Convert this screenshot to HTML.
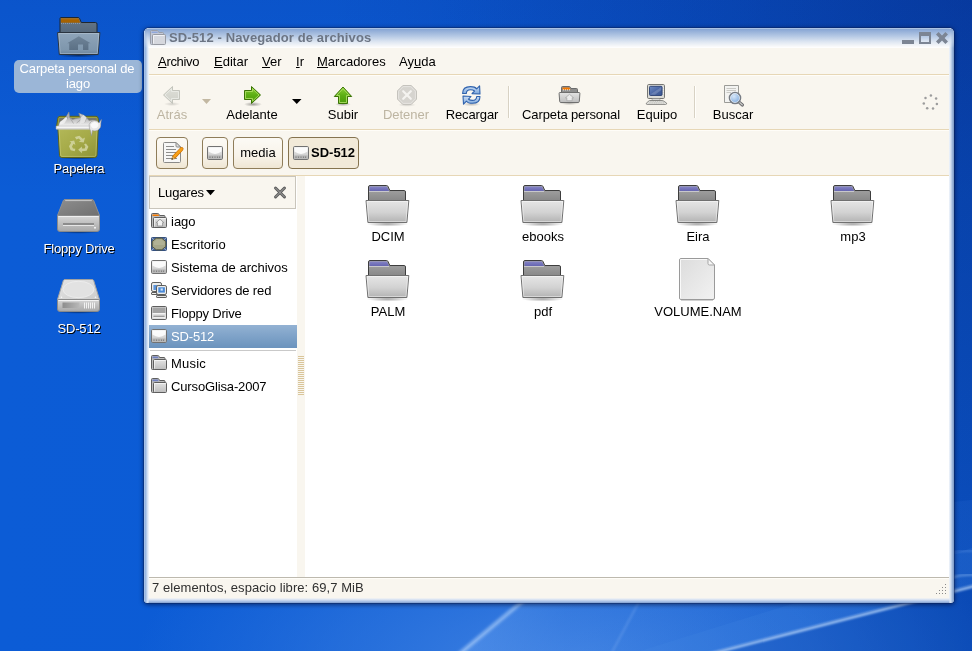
<!DOCTYPE html>
<html>
<head>
<meta charset="utf-8">
<title>SD-512</title>
<style>
*{margin:0;padding:0;box-sizing:border-box;}
html,body{width:972px;height:651px;overflow:hidden;}
body{font-family:"Liberation Sans",sans-serif;font-size:13px;color:#000;position:relative;
 background:
  radial-gradient(ellipse 640px 560px at 972px 0px, rgba(0,22,105,.28) 0%, rgba(0,22,105,.16) 45%, rgba(0,22,105,0) 100%),
  linear-gradient(180deg, rgba(0,20,110,.10) 0%, rgba(0,20,110,0) 30%),
  linear-gradient(90deg,#0c5cd6 0%,#0c5bd4 45%,#0b55ca 75%,#0a4dbb 100%);
}
.abs{position:absolute;}
svg{position:absolute;overflow:visible;}
.t{position:absolute;white-space:nowrap;line-height:15px;height:15px;font-size:13px;will-change:transform;}
.c{text-align:center;}
/* desktop labels */
.dl{color:#fff;text-shadow:1px 1px 0 #000;letter-spacing:-.15px;}
/* window */
#win{position:absolute;left:144px;top:28px;width:810px;height:575px;border-radius:5px 5px 4px 4px;
 background:#fff;box-shadow:0 0 0 1px rgba(10,30,80,.35),0 1px 4px 1px rgba(0,0,30,.5);overflow:hidden;}
#frame{position:absolute;left:0;top:0;width:810px;height:575px;border-radius:5px 5px 3px 3px;
 background:
  linear-gradient(90deg,#bcd0ee 0,#8fb0de 1px,#a6c1e7 2px,#c4d6f0 3px,#e2ebf7 4px,#fff 5px,#fff 805px,#e2ebf7 806px,#c8d8ee 807px,#a9c0e0 808px,#8ba6cf 809px,#7f9bc4 810px);}
#title{position:absolute;left:0;top:0;width:810px;height:20px;border-radius:5px 5px 0 0;
 background:linear-gradient(180deg,#cfdef3 0,#86a6d3 1px,#8daad6 2px,#b4c8e4 8px,#dfe7f2 14px,#fbfbfb 19px,#fff 20px);}
#titleL{z-index:2;position:absolute;left:0;top:2px;width:5px;height:573px;-webkit-mask-image:linear-gradient(180deg,rgba(0,0,0,0) 0,rgba(0,0,0,.25) 6px,#000 18px);mask-image:linear-gradient(180deg,rgba(0,0,0,0) 0,rgba(0,0,0,.25) 6px,#000 18px);
 background:linear-gradient(90deg,#bcd0ee 0,#8fb0de 1px,#a6c1e7 2px,#c4d6f0 3px,#e2ebf7 4px,rgba(255,255,255,0) 5px);}
#titleR{z-index:2;position:absolute;right:0;top:2px;width:5px;height:573px;-webkit-mask-image:linear-gradient(180deg,rgba(0,0,0,0) 0,rgba(0,0,0,.25) 6px,#000 18px);mask-image:linear-gradient(180deg,rgba(0,0,0,0) 0,rgba(0,0,0,.25) 6px,#000 18px);
 background:linear-gradient(270deg,#7f9bc4 0,#8ba6cf 1px,#a9c0e0 2px,#c8d8ee 3px,#e2ebf7 4px,rgba(255,255,255,0) 5px);}
#bot{position:absolute;left:0;bottom:0;width:810px;height:5px;border-radius:0 0 3px 3px;
 background:linear-gradient(180deg,#f4f4f2 0,#e6ebf3 1px,#cfdcf0 2px,#b4c9e9 3px,#9db8e2 4px,#7f9cca 5px);}
#inner{position:absolute;left:5px;top:20px;width:800px;height:550px;background:#f9f6ef;}
.hl{position:absolute;height:1px;left:0;width:800px;}
.pb{position:absolute;top:89px;height:32px;border:1px solid #8f7d59;border-radius:4px;
 background:linear-gradient(180deg,#fcfaf5 0,#f8f3e9 60%,#efe6d3 100%);}
.pb.on{background:linear-gradient(180deg,#f2ead9 0,#f1e9d9 100%);border-color:#85734f;}
.row{position:absolute;left:0;width:148px;height:23px;}
</style>
</head>
<body>
<!--DESKTOP-->
<svg id="bg" style="left:0;top:0" width="972" height="651" viewBox="0 0 972 651">
<defs>
<radialGradient id="w0" cx="0" cy="0" r="1" gradientUnits="userSpaceOnUse" gradientTransform="translate(575,665) scale(440,185)"><stop offset="0" stop-color="#4a8ae6" stop-opacity=".85"/><stop offset=".55" stop-color="#3f82e2" stop-opacity=".45"/><stop offset="1" stop-color="#3b7ee0" stop-opacity="0"/></radialGradient>
<linearGradient id="w1" x1="462" y1="0" x2="760" y2="0" gradientUnits="userSpaceOnUse"><stop offset="0" stop-color="#6aa3f0" stop-opacity=".45"/><stop offset=".35" stop-color="#4c8be6" stop-opacity=".25"/><stop offset="1" stop-color="#3b7ee0" stop-opacity=".12"/></linearGradient>
<filter id="bl1" x="-20%" y="-20%" width="140%" height="140%"><feGaussianBlur stdDeviation="1.6"/></filter>
<filter id="bl2" x="-20%" y="-20%" width="140%" height="140%"><feGaussianBlur stdDeviation=".8"/></filter>
</defs>
<rect x="100" y="440" width="872" height="211" fill="url(#w0)"/>
<path d="M462,651 L521,603 L600,540 L972,500 L972,585 L715,651 Z" fill="url(#w1)"/>
<path d="M715,651 L972,585 L972,651 Z" fill="#062f8c" fill-opacity=".14"/>
<path d="M640,651 L715,651 L972,585 L972,548 Z" fill="#4d8ce8" fill-opacity=".16"/>
<path d="M458,655 L524,600" stroke="#a6cbf8" stroke-opacity=".7" stroke-width="4" filter="url(#bl1)"/>
<path d="M610,656 L641,598" stroke="#9ec5f7" stroke-opacity=".22" stroke-width="2.2" filter="url(#bl2)"/>
<path d="M700,656.5 L980,584.5" stroke="#b4d3fa" stroke-opacity=".85" stroke-width="2.6" filter="url(#bl2)"/>
<path d="M950,578 Q963,574 975,575" stroke="#9ec5f7" stroke-opacity=".5" stroke-width="2" fill="none" filter="url(#bl2)"/>
<path d="M950,553 Q963,550 975,551" stroke="#9ec5f7" stroke-opacity=".3" stroke-width="1.5" fill="none" filter="url(#bl2)"/>
</svg>
<div id="desk">
<div class="abs" style="left:14px;top:60px;width:128px;height:33px;border-radius:5px;background:#9bb6d7"></div>
<div class="t c dl" style="left:13px;width:128px;top:61px;text-shadow:none;letter-spacing:-.16px">Carpeta personal de</div>
<div class="t c dl" style="left:14px;width:128px;top:76px;text-shadow:none">iago</div>
<div class="t c dl" style="left:19px;width:120px;top:161px">Papelera</div>
<div class="t c dl" style="left:19px;width:120px;top:241px">Floppy Drive</div>
<div class="t c dl" style="left:19px;width:120px;top:321px">SD-512</div>
</div>
<!--WINDOW-->
<div id="win">
 <div id="frame"></div>
 <div id="title"></div>
 <div class="t" style="left:25px;top:2px;font-weight:bold;color:#6c7584;letter-spacing:.12px">SD-512 - Navegador de archivos</div>
 <!--TITLEICON-->
 <div class="abs" style="left:758px;top:12px;width:12px;height:4px;background:#7c8594"></div>
 <div class="abs" style="left:775px;top:4px;width:12px;height:12px;border:2px solid #7c8594;border-top-width:4px"></div>
 <svg style="left:792px;top:4px" width="12" height="12" viewBox="0 0 12 12"><path d="M2.6 0 L6 3.4 L9.4 0 L12 2.6 L8.6 6 L12 9.4 L9.4 12 L6 8.6 L2.6 12 L0 9.4 L3.4 6 L0 2.6 Z" fill="#7c8594"/></svg>
 <div class="abs" style="left:0;top:3px;width:1px;height:17px;background:#c2d5ef"></div><div id="titleL"></div><div id="titleR"></div>
 <div id="bot"></div>
 <div id="inner">
  <!-- menubar 48..74 -->
  <div class="t" style="left:9px;top:6px;letter-spacing:-.3px"><u>A</u>rchivo</div>
  <div class="t" style="left:65px;top:6px"><u>E</u>ditar</div>
  <div class="t" style="left:113px;top:6px"><u>V</u>er</div>
  <div class="t" style="left:147px;top:6px"><u>I</u>r</div>
  <div class="t" style="left:168px;top:6px"><u>M</u>arcadores</div>
  <div class="t" style="left:250px;top:6px">Ay<u>u</u>da</div>
  <div class="hl" style="top:26px;background:#e7d7b6"></div>
  <div class="hl" style="top:27px;background:#fffdf8"></div>
  <!-- toolbar 75..129 -->
  <div class="t c" style="left:-7px;width:60px;top:59px;color:#bdb5a2">Atrás</div>
  <div class="t c" style="left:73px;width:60px;top:59px">Adelante</div>
  <div class="t c" style="left:164px;width:60px;top:59px">Subir</div>
  <div class="t c" style="left:227px;width:60px;top:59px;color:#bdb5a2">Detener</div>
  <div class="t c" style="left:283px;width:80px;top:59px;letter-spacing:-.12px">Recargar</div>
  <div class="t c" style="left:361.5px;width:120px;top:59px;letter-spacing:-.12px">Carpeta personal</div>
  <div class="t c" style="left:478px;width:60px;top:59px">Equipo</div>
  <div class="t c" style="left:554px;width:60px;top:59px">Buscar</div>
  <div class="abs" style="left:359px;top:38px;width:1px;height:32px;background:#d8d2c4"></div>
  <div class="abs" style="left:360px;top:38px;width:1px;height:32px;background:#fffefb"></div>
  <div class="abs" style="left:545px;top:38px;width:1px;height:32px;background:#d8d2c4"></div>
  <div class="abs" style="left:546px;top:38px;width:1px;height:32px;background:#fffefb"></div>
  <div class="hl" style="top:81px;background:#e7d7b6"></div>
  <div class="hl" style="top:82px;background:#fffdf8"></div>
  <!--TOOLICONS-->
  <!-- pathbar 130..175 -->
  <div class="pb" style="left:7px;width:32px"></div>
  <div class="pb" style="left:53px;width:26px"></div>
  <div class="pb" style="left:84px;width:50px"><div class="t c" style="left:0;width:48px;top:7px">media</div></div>
  <div class="pb on" style="left:139px;width:71px"><div class="t" style="left:22px;top:7px;font-weight:bold">SD-512</div></div>
  <!--PATHICONS-->
  <div class="hl" style="top:127px;background:#e7d7b6"></div>
  <!-- sidebar -->
  <div class="abs" style="left:0;top:128px;width:148px;height:401px;background:#fff"></div>
  <div class="abs" style="left:0;top:128px;width:147px;height:33px;background:#f9f6ef;border:1px solid #c9c5bb"></div>
  <div class="t" style="left:9px;top:137px;letter-spacing:-.15px">Lugares</div>
  
  <div class="t" style="left:22px;top:166px;color:#000;letter-spacing:0px">iago</div>
<div class="t" style="left:22px;top:189px;color:#000;letter-spacing:0.05px">Escritorio</div>
<div class="t" style="left:22px;top:212px;color:#000;letter-spacing:-0.02px">Sistema de archivos</div>
<div class="t" style="left:22px;top:235px;color:#000;letter-spacing:-0.14px">Servidores de red</div>
<div class="t" style="left:22px;top:258px;color:#000;letter-spacing:-0.2px">Floppy Drive</div>
<div class="abs" style="left:0;top:277px;width:148px;height:23px;background:linear-gradient(180deg,#93b2d3 0,#7ea2c8 50%,#6b93bd 100%)"></div>
<div class="t" style="left:22px;top:281px;color:#fff;letter-spacing:-0.15px">SD-512</div>
<div class="t" style="left:22px;top:308px;color:#000;letter-spacing:0.2px">Music</div>
<div class="t" style="left:22px;top:331px;color:#000;letter-spacing:-0.14px">CursoGlisa-2007</div>
<div class="abs" style="left:1px;top:302px;width:146px;height:1px;background:#c9c9c9"></div>

  <!-- splitter -->
  <!--SPLIT-->
  <!-- main view -->
  <div class="abs" style="left:156px;top:128px;width:644px;height:401px;background:#fff"></div>
  <div class="t c" style="left:179px;width:120px;top:181px">DCIM</div>
<div class="t c" style="left:334px;width:120px;top:181px">ebooks</div>
<div class="t c" style="left:489px;width:120px;top:181px">Eira</div>
<div class="t c" style="left:644px;width:120px;top:181px">mp3</div>
<div class="t c" style="left:179px;width:120px;top:256px">PALM</div>
<div class="t c" style="left:334px;width:120px;top:256px">pdf</div>
<div class="t c" style="left:489px;width:120px;top:256px">VOLUME.NAM</div>

  <!-- statusbar -->
  <div class="hl" style="top:529px;background:#bdb9ae"></div>
  <div class="hl" style="top:530px;background:#fffdf8"></div>
  <div class="t" style="left:3px;top:532px;color:#303030;letter-spacing:.06px">7 elementos, espacio libre: 69,7 MiB</div>
  <!--GRIP-->
 </div>
</div>
<svg id="ov" style="left:0;top:0;pointer-events:none" width="972" height="651" viewBox="0 0 972 651"><defs>
<linearGradient id="gBack" x1="0" y1="0" x2="0" y2="1"><stop offset="0" stop-color="#a9a9a9"/><stop offset="1" stop-color="#858585"/></linearGradient>
<linearGradient id="gFront" x1="0" y1="0" x2="0" y2="1"><stop offset="0" stop-color="#e6e6e6"/><stop offset=".55" stop-color="#d2d2d2"/><stop offset="1" stop-color="#b2b2b2"/></linearGradient>
<linearGradient id="gTab" x1="0" y1="0" x2="0" y2="1"><stop offset="0" stop-color="#8584c6"/><stop offset="1" stop-color="#6665b0"/></linearGradient>
<radialGradient id="gSh" cx=".5" cy=".5" r=".5"><stop offset="0" stop-color="#000" stop-opacity=".45"/><stop offset="1" stop-color="#000" stop-opacity="0"/></radialGradient>
<linearGradient id="gFile" x1="0" y1="0" x2="1" y2="1"><stop offset="0" stop-color="#dcdcdc"/><stop offset="1" stop-color="#f2f2f2"/></linearGradient>
<linearGradient id="gHBack" x1="0" y1="0" x2="0" y2="1"><stop offset="0" stop-color="#68798b"/><stop offset="1" stop-color="#54677a"/></linearGradient>
<linearGradient id="gHFront" x1="0" y1="0" x2="0" y2="1"><stop offset="0" stop-color="#8fa5ba"/><stop offset=".8" stop-color="#7e96ac"/><stop offset="1" stop-color="#6c849b"/></linearGradient>
<linearGradient id="gHouse" x1="0" y1="0" x2="0" y2="1"><stop offset="0" stop-color="#6f8498"/><stop offset="1" stop-color="#5b7085"/></linearGradient>
<linearGradient id="gBin" x1="0" y1="0" x2="1" y2="1"><stop offset="0" stop-color="#b3b858"/><stop offset=".5" stop-color="#a5aa48"/><stop offset="1" stop-color="#8d9236"/></linearGradient>
<linearGradient id="gPaper" x1="0" y1="0" x2="0" y2="1"><stop offset="0" stop-color="#e4e4e4"/><stop offset=".35" stop-color="#b4b4b4"/><stop offset=".7" stop-color="#d4d4d4"/><stop offset="1" stop-color="#f6f6f6"/></linearGradient>
<linearGradient id="gFlTop" x1="0" y1="0" x2="1" y2="1"><stop offset="0" stop-color="#8e8e8e"/><stop offset="1" stop-color="#707070"/></linearGradient>
<linearGradient id="gFlFront" x1="0" y1="0" x2="0" y2="1"><stop offset="0" stop-color="#d9d9d9"/><stop offset=".3" stop-color="#c8c8c8"/><stop offset="1" stop-color="#a8a8a8"/></linearGradient>
<linearGradient id="gHdTop" x1="0" y1="0" x2="1" y2="1"><stop offset="0" stop-color="#e4e4e4"/><stop offset="1" stop-color="#cdcdcd"/></linearGradient>
<linearGradient id="gSlot" x1="0" y1="0" x2="1" y2="0"><stop offset="0" stop-color="#8d8d8d"/><stop offset="1" stop-color="#b8b8b8"/></linearGradient>
</defs>
<g transform="translate(365,185)">
<ellipse cx="22.5" cy="39" rx="21" ry="2.6" fill="url(#gSh)" opacity=".8"/>
<path d="M3.5,2 Q3.5,.5 5,.5 L21.5,.5 Q22.6,.5 23,1.5 L24.8,5.5 L39.2,5.5 Q40.5,5.5 40.5,7 L40.5,17 L3.5,17 Z" fill="url(#gBack)" stroke="#3d3d3d" stroke-width="1"/>
<path d="M4.5,2 Q4.5,1.5 5,1.5 L21.5,1.5 Q22,1.5 22.3,2.2 L24,6 L4.5,6 Z" fill="url(#gTab)"/>
<path d="M4.5,6.5 H24" stroke="#f4f4fb" stroke-width="1" stroke-dasharray="1 1"/>
<path d="M1,15.5 L43.8,15.5 L41.9,37.5 L2.9,37.5 Z" fill="url(#gFront)" stroke="#707070" stroke-width="1" stroke-linejoin="round"/>
<path d="M2.1,16.5 L42.7,16.5 L41,36.5 L3.8,36.5 Z" fill="none" stroke="#fff" stroke-opacity=".45" stroke-width="1"/>
</g>
<g transform="translate(520,185)">
<ellipse cx="22.5" cy="39" rx="21" ry="2.6" fill="url(#gSh)" opacity=".8"/>
<path d="M3.5,2 Q3.5,.5 5,.5 L21.5,.5 Q22.6,.5 23,1.5 L24.8,5.5 L39.2,5.5 Q40.5,5.5 40.5,7 L40.5,17 L3.5,17 Z" fill="url(#gBack)" stroke="#3d3d3d" stroke-width="1"/>
<path d="M4.5,2 Q4.5,1.5 5,1.5 L21.5,1.5 Q22,1.5 22.3,2.2 L24,6 L4.5,6 Z" fill="url(#gTab)"/>
<path d="M4.5,6.5 H24" stroke="#f4f4fb" stroke-width="1" stroke-dasharray="1 1"/>
<path d="M1,15.5 L43.8,15.5 L41.9,37.5 L2.9,37.5 Z" fill="url(#gFront)" stroke="#707070" stroke-width="1" stroke-linejoin="round"/>
<path d="M2.1,16.5 L42.7,16.5 L41,36.5 L3.8,36.5 Z" fill="none" stroke="#fff" stroke-opacity=".45" stroke-width="1"/>
</g>
<g transform="translate(675,185)">
<ellipse cx="22.5" cy="39" rx="21" ry="2.6" fill="url(#gSh)" opacity=".8"/>
<path d="M3.5,2 Q3.5,.5 5,.5 L21.5,.5 Q22.6,.5 23,1.5 L24.8,5.5 L39.2,5.5 Q40.5,5.5 40.5,7 L40.5,17 L3.5,17 Z" fill="url(#gBack)" stroke="#3d3d3d" stroke-width="1"/>
<path d="M4.5,2 Q4.5,1.5 5,1.5 L21.5,1.5 Q22,1.5 22.3,2.2 L24,6 L4.5,6 Z" fill="url(#gTab)"/>
<path d="M4.5,6.5 H24" stroke="#f4f4fb" stroke-width="1" stroke-dasharray="1 1"/>
<path d="M1,15.5 L43.8,15.5 L41.9,37.5 L2.9,37.5 Z" fill="url(#gFront)" stroke="#707070" stroke-width="1" stroke-linejoin="round"/>
<path d="M2.1,16.5 L42.7,16.5 L41,36.5 L3.8,36.5 Z" fill="none" stroke="#fff" stroke-opacity=".45" stroke-width="1"/>
</g>
<g transform="translate(830,185)">
<ellipse cx="22.5" cy="39" rx="21" ry="2.6" fill="url(#gSh)" opacity=".8"/>
<path d="M3.5,2 Q3.5,.5 5,.5 L21.5,.5 Q22.6,.5 23,1.5 L24.8,5.5 L39.2,5.5 Q40.5,5.5 40.5,7 L40.5,17 L3.5,17 Z" fill="url(#gBack)" stroke="#3d3d3d" stroke-width="1"/>
<path d="M4.5,2 Q4.5,1.5 5,1.5 L21.5,1.5 Q22,1.5 22.3,2.2 L24,6 L4.5,6 Z" fill="url(#gTab)"/>
<path d="M4.5,6.5 H24" stroke="#f4f4fb" stroke-width="1" stroke-dasharray="1 1"/>
<path d="M1,15.5 L43.8,15.5 L41.9,37.5 L2.9,37.5 Z" fill="url(#gFront)" stroke="#707070" stroke-width="1" stroke-linejoin="round"/>
<path d="M2.1,16.5 L42.7,16.5 L41,36.5 L3.8,36.5 Z" fill="none" stroke="#fff" stroke-opacity=".45" stroke-width="1"/>
</g>
<g transform="translate(365,260)">
<ellipse cx="22.5" cy="39" rx="21" ry="2.6" fill="url(#gSh)" opacity=".8"/>
<path d="M3.5,2 Q3.5,.5 5,.5 L21.5,.5 Q22.6,.5 23,1.5 L24.8,5.5 L39.2,5.5 Q40.5,5.5 40.5,7 L40.5,17 L3.5,17 Z" fill="url(#gBack)" stroke="#3d3d3d" stroke-width="1"/>
<path d="M4.5,2 Q4.5,1.5 5,1.5 L21.5,1.5 Q22,1.5 22.3,2.2 L24,6 L4.5,6 Z" fill="url(#gTab)"/>
<path d="M4.5,6.5 H24" stroke="#f4f4fb" stroke-width="1" stroke-dasharray="1 1"/>
<path d="M1,15.5 L43.8,15.5 L41.9,37.5 L2.9,37.5 Z" fill="url(#gFront)" stroke="#707070" stroke-width="1" stroke-linejoin="round"/>
<path d="M2.1,16.5 L42.7,16.5 L41,36.5 L3.8,36.5 Z" fill="none" stroke="#fff" stroke-opacity=".45" stroke-width="1"/>
</g>
<g transform="translate(520,260)">
<ellipse cx="22.5" cy="39" rx="21" ry="2.6" fill="url(#gSh)" opacity=".8"/>
<path d="M3.5,2 Q3.5,.5 5,.5 L21.5,.5 Q22.6,.5 23,1.5 L24.8,5.5 L39.2,5.5 Q40.5,5.5 40.5,7 L40.5,17 L3.5,17 Z" fill="url(#gBack)" stroke="#3d3d3d" stroke-width="1"/>
<path d="M4.5,2 Q4.5,1.5 5,1.5 L21.5,1.5 Q22,1.5 22.3,2.2 L24,6 L4.5,6 Z" fill="url(#gTab)"/>
<path d="M4.5,6.5 H24" stroke="#f4f4fb" stroke-width="1" stroke-dasharray="1 1"/>
<path d="M1,15.5 L43.8,15.5 L41.9,37.5 L2.9,37.5 Z" fill="url(#gFront)" stroke="#707070" stroke-width="1" stroke-linejoin="round"/>
<path d="M2.1,16.5 L42.7,16.5 L41,36.5 L3.8,36.5 Z" fill="none" stroke="#fff" stroke-opacity=".45" stroke-width="1"/>
</g>
<g transform="translate(679,258)">
<path d="M2,.5 H29 L35.5,7 V40 Q35.5,41.5 34,41.5 H2 Q.5,41.5 .5,40 V2 Q.5,.5 2,.5 Z" fill="url(#gFile)" stroke="#9a9a9a" stroke-width="1"/>
<path d="M1.5,40.5 V1.5 H28.5" fill="none" stroke="#fff" stroke-opacity=".8"/>
<path d="M29,.5 V5.5 Q29,7 30.5,7 H35.5 Z" fill="#f6f6f6" stroke="#a5a5a5" stroke-width="1" stroke-linejoin="round"/>
<path d="M2,42.5 H34" stroke="#000" stroke-opacity=".18"/>
</g>
<g transform="translate(57,17)">
<ellipse cx="21.5" cy="38.5" rx="21" ry="2" fill="url(#gSh)"/>
<path d="M3,1.5 Q3,.5 4,.5 L21,.5 Q22,.5 22.5,1.4 L24.3,5.5 L38.5,5.5 Q40,5.5 40,7 L40,17 L3,17 Z" fill="url(#gHBack)" stroke="#1f2730" stroke-width="1"/>
<path d="M4,2 Q4,1.5 4.5,1.5 L21,1.5 Q21.5,1.5 21.8,2.1 L23.4,5.8 L4,5.8 Z" fill="#a66200"/>
<path d="M4,1.9 H21.3" stroke="#b8700a" stroke-width=".8"/>
<path d="M4,6.4 H23.5" stroke="#aebccc" stroke-opacity=".75" stroke-width=".8" stroke-dasharray="1 1"/>
<path d="M.6,15.5 L42.9,15.5 L41.2,37.5 L2.3,37.5 Z" fill="url(#gHFront)" stroke="#2a343f" stroke-width="1" stroke-linejoin="round"/>
<path d="M1.7,16.5 L41.8,16.5 L40.3,36.5 L3.2,36.5 Z" fill="none" stroke="#c3d0de" stroke-opacity=".45"/>
<path d="M21.8,19.2 L33.6,26.2 L31.4,26.2 L31.4,33 L26,33 L26,27.4 L21,27.4 L21,33 L12.2,33 L12.2,26.2 L10.2,26.2 Z" fill="url(#gHouse)"/>
</g>
<g transform="translate(55,111)">
<ellipse cx="23.5" cy="46.8" rx="20" ry="1.8" fill="url(#gSh)"/>
<path d="M1.6,15.5 L2.8,7.2 Q3.1,5.3 5,5.3 L41,5.3 Q42.9,5.3 43.1,7.2 L44,15.5 L43.2,18 L2.9,18 Z" fill="#9ea240" stroke="#5f6416" stroke-width="1" stroke-linejoin="round"/>
<path d="M4.4,7 L41.6,7 L42.4,15.5 L3.4,15.5 Z" fill="#77776a"/>
<path d="M2.9,17.5 L43.2,17.5 L42,44.3 Q41.9,46.5 39.6,46.5 L6.9,46.5 Q4.6,46.5 4.5,44.3 Z" fill="url(#gBin)" stroke="#5f6416" stroke-width="1"/>
<path d="M4.1,18.6 L42,18.6 L40.9,44 Q40.8,45.4 39.4,45.4 L7.1,45.4 Q5.7,45.4 5.6,44 Z" fill="none" stroke="#d4d88a" stroke-opacity=".45"/>
<path d="M3.4,15 L5,11 L8,8.8 L11,6 L13.9,1 L14.6,6.2 L17.5,8.6 L21,7.6 L25.5,6.8 L23.8,2.2 L28.5,4 L31.5,6.6 L34,9.6 L38,9 L41.5,10.2 L42.4,15.5 L3.4,15.5 Z" fill="url(#gPaper)" stroke="#8a8a8a" stroke-width=".5" stroke-linejoin="round"/>
<path d="M13.9,1 L12.4,7.8 L7.6,11.6 M23.8,2.2 L26,8.4 L21.6,12 M14.6,6.2 L18.5,12.5 M31.5,6.6 L29.6,11.6" stroke="#7d7d7d" stroke-width=".55" fill="none" stroke-opacity=".8"/>
<path d="M5,11 L8,8.8 L11,6 L12.4,7.8 L9,12.6 L4.2,13.8 Z" fill="#f4f4f4" fill-opacity=".85"/>
<path d="M25.5,6.8 L28.5,4 L31.5,6.6 L29.6,11.6 L25,13 Z" fill="#e9e9e9" fill-opacity=".8"/>
<path d="M1.2,15 L35.8,15 L35.8,18.3 L1.8,18.3 Q1,18.3 1,17.4 Z" fill="#f4f4f4" stroke="#a9a9a9" stroke-width=".5"/>
<path d="M1.5,17.6 H35.6" stroke="#cfcfcf" stroke-width=".8"/>
<path d="M34.2,13.4 Q35.2,10 39.2,9.6 Q42.6,9.4 44,12 L46.4,8.4 L45.8,12.6 Q46.6,16.8 42.8,19.2 Q40,20.6 37.4,19.4 L36.6,25 L35.4,19.6 Q34,17.6 34.2,13.4 Z" fill="#e6e6e6" stroke="#8f8f8f" stroke-width=".5" stroke-linejoin="round"/>
<path d="M35.6,13.6 Q37,11 40,11 Q43.6,11.6 43.4,15 Q42,17.6 38.6,17.6 Q36,17 35.6,13.6 Z" fill="#fafafa" fill-opacity=".95"/>
<g fill="#d3d6a2" fill-opacity=".85" transform="translate(.4,1.6)">
<path d="M19.5,24.5 L24,23.2 L27.3,26.2 L29.6,25 L28.3,30 L23.3,29.2 L25.3,27.8 L23.3,26 L21,26.8 Z"/>
<path d="M30.5,31 L33,34.2 L31.2,38.2 L26.5,38.6 L26.5,40.6 L22.8,37.2 L26.5,34 L26.5,36 L29.3,35.8 L30,33.6 L28.6,32 Z"/>
<path d="M19.3,38.6 L15.3,37.6 L13.6,33.6 L15.8,29.8 L14,28.8 L18.8,27.8 L20,32.4 L18.1,31.2 L16.6,33.8 L17.6,35.8 L20,36.2 Z"/>
</g>
</g>
<g transform="translate(57,199)">
<ellipse cx="21.5" cy="33" rx="21" ry="1.8" fill="url(#gSh)"/>
<path d="M8,.5 L35,.5 Q36.2,.5 36.7,1.6 L42.5,16.5 L.5,16.5 L6.3,1.6 Q6.8,.5 8,.5 Z" fill="url(#gFlTop)" stroke="#909090" stroke-width="1"/>
<path d="M8.2,1.6 L34.8,1.6" stroke="#c9c9c9" stroke-width="1"/>
<path d="M.5,17.5 Q.5,16.5 1.5,16.5 L41.5,16.5 Q42.5,16.5 42.5,17.5 L42.5,30 Q42.5,32.5 40,32.5 L3,32.5 Q.5,32.5 .5,30 Z" fill="url(#gFlFront)" stroke="#8a8a8a" stroke-width="1"/>
<path d="M1.5,17.5 H41.5" stroke="#efefef"/>
<rect x="6" y="24" width="31" height="2" fill="#8c8c8c"/>
<rect x="6" y="26" width="31" height="1" fill="#e6e6e6"/>
<circle cx="38" cy="28.7" r="1" fill="#f4f4f4"/>
</g>
<g transform="translate(57,279)">
<ellipse cx="21.5" cy="33" rx="21" ry="1.8" fill="url(#gSh)"/>
<path d="M8,.5 L35,.5 Q36.2,.5 36.7,1.6 L42.5,20.5 L.5,20.5 L6.3,1.6 Q6.8,.5 8,.5 Z" fill="url(#gHdTop)" stroke="#a2a2a2" stroke-width="1"/>
<ellipse cx="21.5" cy="10.5" rx="15.5" ry="8.2" fill="#e2e2e2" stroke="#efefef" stroke-width=".8"/>
<circle cx="4.5" cy="18.3" r=".8" fill="#f8f8f8"/><circle cx="38.5" cy="18.3" r=".8" fill="#f8f8f8"/>
<path d="M.5,21.5 Q.5,20.5 1.5,20.5 L41.5,20.5 Q42.5,20.5 42.5,21.5 L42.5,30 Q42.5,32.5 40,32.5 L3,32.5 Q.5,32.5 .5,30 Z" fill="url(#gFlFront)" stroke="#8a8a8a" stroke-width="1"/>
<path d="M1.5,21.5 H41.5" stroke="#f2f2f2"/>
<rect x="5.5" y="23.5" width="17" height="5.5" fill="url(#gSlot)"/>
<rect x="27" y="23.5" width="1" height="6" fill="#f2f2f2"/><rect x="29" y="23.5" width="1" height="6" fill="#f2f2f2"/><rect x="31" y="23.5" width="1" height="6" fill="#f2f2f2"/><rect x="33" y="23.5" width="1" height="6" fill="#f2f2f2"/><rect x="35" y="23.5" width="1" height="6" fill="#f2f2f2"/><rect x="37" y="23.5" width="1" height="6" fill="#f2f2f2"/>
</g>
<defs>
<linearGradient id="gGreen" x1="0" y1="0" x2="0" y2="1"><stop offset="0" stop-color="#8fd23a"/><stop offset=".5" stop-color="#5cae14"/><stop offset="1" stop-color="#4a9a08"/></linearGradient>
<linearGradient id="gGrayArr" x1="0" y1="0" x2="0" y2="1"><stop offset="0" stop-color="#dedfd8"/><stop offset="1" stop-color="#cfd0c8"/></linearGradient>
<linearGradient id="gBlueA" x1="0" y1="0" x2="0" y2="1"><stop offset="0" stop-color="#cfe0f5"/><stop offset="1" stop-color="#7aa6dc"/></linearGradient>
<linearGradient id="gScreen" x1="0" y1="0" x2="1" y2="1"><stop offset="0" stop-color="#6f8bc2"/><stop offset=".5" stop-color="#4b67a5"/><stop offset="1" stop-color="#3a558f"/></linearGradient>
<linearGradient id="gDrv" x1="0" y1="0" x2="0" y2="1"><stop offset="0" stop-color="#f0f0f0"/><stop offset=".55" stop-color="#d6d6d6"/><stop offset="1" stop-color="#bcbcbc"/></linearGradient>
<linearGradient id="gSmF" x1="0" y1="0" x2="0" y2="1"><stop offset="0" stop-color="#e4e4e4"/><stop offset="1" stop-color="#bdbdbd"/></linearGradient>
<radialGradient id="gLens" cx=".4" cy=".35" r=".7"><stop offset="0" stop-color="#d6e6f8"/><stop offset="1" stop-color="#7aa7dc"/></radialGradient>
<linearGradient id="gPencil" x1="0" y1="0" x2="1" y2="1"><stop offset="0" stop-color="#ffb52e"/><stop offset="1" stop-color="#f08a00"/></linearGradient>

<!-- 16px drive icon -->

<!-- 16px folder icon -->

</defs>

<!-- title icon (150,30)-(166,45) -->
<g transform="translate(150,30)">
<path d="M.5,1.5 Q.5,.5 1.5,.5 H7 Q7.8,.5 8.2,1.3 L8.8,2.5 H12.5 Q13.5,2.5 13.5,3.5 V14.5 H1.5 Q.5,14.5 .5,13.5 Z" fill="#c3c9d8" stroke="#9a9ea8"/>
<path d="M1.5,1.5 H7.3 L8,3 H1.5 Z" fill="#8fa6d8"/>
<rect x="2.5" y="4.5" width="13" height="10" rx="1" fill="#d6d8de" stroke="#979aa2"/>
<path d="M3.5,13.5 V5.5 H14.5" fill="none" stroke="#f3f4f7" stroke-opacity=".9"/>
</g>

<!-- BACK arrow (163..180, 86..104) disabled -->
<ellipse cx="172" cy="104" rx="8" ry="2" fill="url(#gSh)" opacity=".35"/>
<path d="M163.5,95 L172.5,86.5 L172.5,90.5 L179.5,90.5 L179.5,99.5 L172.5,99.5 L172.5,103.5 Z" fill="url(#gGrayArr)" stroke="#c3c4bc" stroke-linejoin="round"/>
<path d="M165,95 L171.5,88.8 L171.5,91.5 L178.5,91.5 L178.5,98.5 L171.5,98.5 L171.5,101.2 Z" fill="none" stroke="#ecede8" stroke-opacity=".8"/>
<!-- dropdown 1 (disabled) -->
<path d="M202,99 H211 L206.5,104 Z" fill="#c3b8a2"/>
<!-- FORWARD arrow (244..261) -->
<ellipse cx="253" cy="104.3" rx="9" ry="2.4" fill="url(#gSh)" opacity=".8"/>
<path d="M260.5,95 L251.5,86.5 L251.5,90.5 L244.5,90.5 L244.5,99.5 L251.5,99.5 L251.5,103.5 Z" fill="url(#gGreen)" stroke="#3a7304" stroke-linejoin="round"/>
<path d="M259,95 L252.5,88.8 L252.5,91.5 L245.5,91.5 L245.5,98.5 L252.5,98.5 L252.5,101.2 Z" fill="none" stroke="#b4e46c" stroke-opacity=".8"/>
<!-- dropdown 2 -->
<path d="M292,99 H301.5 L296.75,104 Z" fill="#000"/>
<!-- UP arrow (334..352, 87..104) -->
<ellipse cx="343" cy="104.3" rx="8" ry="2" fill="url(#gSh)" opacity=".7"/>
<path d="M343,87 L351.7,96.5 L347.5,96.5 L347.5,103.5 L338.5,103.5 L338.5,96.5 L334.3,96.5 Z" fill="url(#gGreen)" stroke="#3a7304" stroke-linejoin="round"/>
<path d="M343,88.6 L349.4,95.5 L346.5,95.5 L346.5,102.5 L339.5,102.5 L339.5,95.5 L336.6,95.5 Z" fill="none" stroke="#b4e46c" stroke-opacity=".8"/>
<!-- STOP (397..417, 85..105) disabled -->
<ellipse cx="407" cy="104.8" rx="9" ry="2" fill="url(#gSh)" opacity=".35"/>
<path d="M402.8,85.5 H411.2 L416.5,90.8 V99.2 L411.2,104.5 H402.8 L397.5,99.2 V90.8 Z" fill="#d6d4cf" stroke="#c5c3bd"/>
<path d="M403.2,86.6 H410.8 L415.4,91.2 V98.8 L410.8,103.4 H403.2 L398.6,98.8 V91.2 Z" fill="none" stroke="#e6e4e0"/>
<path d="M403.2,91.2 L410.8,98.8 M410.8,91.2 L403.2,98.8" stroke="#f4f3f0" stroke-width="2.2" stroke-linecap="round"/>
<!-- RELOAD (462..481, 86..104) -->
<ellipse cx="471.5" cy="104.3" rx="9" ry="2" fill="url(#gSh)" opacity=".5"/>
<g stroke="#2f62ad" stroke-width="1.1" stroke-linejoin="round">
<path d="M462.6,93.5 Q462.6,86.6 470.5,86.6 Q475,86.6 476.7,88.8 L479.6,85.8 L480,94 L472,93.6 L474.5,91 Q473,89.8 470.5,89.8 Q466.5,89.8 466.3,93.5 Z" fill="url(#gBlueA)"/>
<path d="M480,96.5 Q480,103.3 472.5,103.3 Q468,103.3 466.5,101.2 L463.5,104.2 L463,96 L471,96.5 L468.5,99.2 Q470,100.4 472.5,100.4 Q476.5,100.4 476.7,96.5 Z" fill="url(#gBlueA)"/>
</g>
<!-- HOME folder toolbar (559..580, 86..103) -->
<ellipse cx="569.5" cy="103.3" rx="10" ry="1.8" fill="url(#gSh)" opacity=".6"/>
<path d="M561.5,87.5 Q561.5,86.5 562.5,86.5 H569.3 Q570,86.5 570.4,87.2 L571,88.5 H576.5 Q577.5,88.5 577.5,89.5 V93.5 H561.5 Z" fill="#8e8e8e" stroke="#6b6b6b"/>
<path d="M562.5,87.5 H569.4 L570.4,89.8 H562.5 Z" fill="#f57900"/>
<path d="M563,89.9 H570" stroke="#fff" stroke-width=".9" stroke-dasharray="1 1"/>
<path d="M560,92.5 H579 Q580,92.5 579.9,93.5 L579.3,101.5 Q579.2,102.5 578.2,102.5 H560.8 Q559.8,102.5 559.7,101.5 L559.1,93.5 Q559,92.5 560,92.5 Z" fill="url(#gSmF)" stroke="#6f6f6f"/>
<path d="M569.5,94.3 L573.6,97.8 L572.2,97.8 L572.2,100.7 L566.8,100.7 L566.8,97.8 L565.4,97.8 Z" fill="#ececec" stroke="#a2a2a2" stroke-width=".7"/>
<!-- COMPUTER (646..667, 84..104.5) -->
<rect x="647.5" y="84.5" width="17" height="14" rx="1.2" fill="#dcdcd7" stroke="#767673"/>
<rect x="649.5" y="86.3" width="12.6" height="9.2" rx="1" fill="url(#gScreen)" stroke="#2b4173" stroke-width=".9"/>
<path d="M650.3,94.6 L661.3,87 L661.3,90 L655,94.8 Z" fill="#fff" fill-opacity=".18"/>
<path d="M663.4,87.2 V94" stroke="#f6f6f6" stroke-width=".8" stroke-dasharray="1 1"/>
<path d="M652.5,98.8 H659.5 L660.3,100.4 H651.7 Z" fill="#f0f0ee" stroke="#8a8a86" stroke-width=".6"/>
<path d="M649.4,100.5 H662.8 L666.6,103.1 Q666.9,104.4 665.7,104.4 H647.1 Q646,104.4 646.3,103.2 Z" fill="#ebebe8" stroke="#7d7d79" stroke-width=".9" stroke-linejoin="round"/>
<path d="M649.6,101.7 H663.2 M648.6,102.9 H664.6" stroke="#a9a9a4" stroke-width=".7" stroke-dasharray="1.2 .6"/>
<!-- SEARCH (724..744, 85..105.5) -->
<path d="M724.5,85.5 H738.5 V102.5 H724.5 Z" fill="#f3f3f1" stroke="#9b9b97"/>
<path d="M726.5,88.5 H736 M726.5,90.5 H736 M726.5,92.5 H731" stroke="#c4c4c0" stroke-width=".9"/>
<path d="M739.4,102.4 L742.4,105" stroke="#66666a" stroke-width="3.2" stroke-linecap="round"/>
<path d="M739.6,102.4 L742.4,104.9" stroke="#c9c9c6" stroke-width="1.3" stroke-linecap="round"/>
<circle cx="735" cy="98" r="5.5" fill="url(#gLens)" stroke="#777c84" stroke-width="1.6"/>
<circle cx="735" cy="98" r="4.5" fill="none" stroke="#fff" stroke-opacity=".75" stroke-width=".8"/>

<!-- spinner -->
<g fill="#9c9c9c">
<circle cx="930.9" cy="95.5" r="1.25"/><circle cx="936.1" cy="98.5" r="1.25"/><circle cx="936.9" cy="104.1" r="1.25"/><circle cx="933.0" cy="108.4" r="1.25"/><circle cx="927.2" cy="108.2" r="1.25"/><circle cx="923.8" cy="103.4" r="1.25"/><circle cx="925.5" cy="97.9" r="1.25"/>
</g>

<!-- PATHBAR icons -->
<!-- edit doc (163..181, 142..163) -->
<g transform="translate(163,142)">
<path d="M1.5,.5 H13 L17.5,5 V19.5 Q17.5,20.5 16.5,20.5 H1.5 Q.5,20.5 .5,19.5 V1.5 Q.5,.5 1.5,.5 Z" fill="#f7f7f6" stroke="#8a8a88"/>
<path d="M13,.5 V4 Q13,5 14,5 H17.5 Z" fill="#e2e2e0" stroke="#8a8a88" stroke-linejoin="round"/>
<path d="M3,4.5 H11 M3,7.5 H13 M3,10.5 H13 M3,13.5 H10 M3,16.5 H14" stroke="#8e8e8c" stroke-width="1"/>
<path d="M11.4,14.6 L18.6,7" stroke="#c66a00" stroke-width="3.8" stroke-linecap="round"/>
<path d="M11.4,14.6 L18.6,7" stroke="url(#gPencil)" stroke-width="2.6" stroke-linecap="round"/>
<path d="M8.6,17.6 L9.6,14 L12.2,16.6 Z" fill="#e9b96e" stroke="#8f5902" stroke-width=".4"/>
<path d="M8.6,17.6 L9,16 L10.2,17.2 Z" fill="#111"/>
</g>
<g transform="translate(207,145)">
<rect x=".5" y="1.5" width="15" height="13" rx="1.2" fill="url(#gDrv)" stroke="#727272"/>
<path d="M1.5,2.5 H14.5 V6.6 Q8,11.2 1.5,6.6 Z" fill="#fdfdfd" fill-opacity=".9"/>
<rect x="1.5" y="10.5" width="13" height="3" fill="#b4b4b4"/>
<path d="M3,11.5 V13 M5.5,11.5 V13 M8,11.5 V13 M10.5,11.5 V13 M12.5,11.5 V13" stroke="#7f7f7f" stroke-width=".9"/>
</g>
<g transform="translate(293,145)">
<rect x=".5" y="1.5" width="15" height="13" rx="1.2" fill="url(#gDrv)" stroke="#727272"/>
<path d="M1.5,2.5 H14.5 V6.6 Q8,11.2 1.5,6.6 Z" fill="#fdfdfd" fill-opacity=".9"/>
<rect x="1.5" y="10.5" width="13" height="3" fill="#b4b4b4"/>
<path d="M3,11.5 V13 M5.5,11.5 V13 M8,11.5 V13 M10.5,11.5 V13 M12.5,11.5 V13" stroke="#7f7f7f" stroke-width=".9"/>
</g>

<!-- splitter grip lines -->
<g stroke="#d9c59a" stroke-width="1">
<path d="M298,356.5 H304 M298,358.5 H304 M298,360.5 H304 M298,362.5 H304 M298,364.5 H304 M298,366.5 H304 M298,368.5 H304 M298,370.5 H304 M298,372.5 H304 M298,374.5 H304 M298,376.5 H304 M298,378.5 H304 M298,380.5 H304 M298,382.5 H304 M298,384.5 H304 M298,386.5 H304 M298,388.5 H304 M298,390.5 H304 M298,392.5 H304 M298,394.5 H304"/>
</g>
<!-- resize grip dots -->
<g fill="#8a8a8a">
<rect x="945" y="584" width="1" height="1"/>
<rect x="942" y="587" width="1" height="1"/><rect x="945" y="587" width="1" height="1"/>
<rect x="939" y="590" width="1" height="1"/><rect x="942" y="590" width="1" height="1"/><rect x="945" y="590" width="1" height="1"/>
<rect x="936" y="593" width="1" height="1"/><rect x="939" y="593" width="1" height="1"/><rect x="942" y="593" width="1" height="1"/><rect x="945" y="593" width="1" height="1"/>
</g>
<!-- sidebar close X (274..286, 186..198) -->
<path d="M275.5,188 L284.5,197 M284.5,188 L275.5,197" stroke="#5c5c5c" stroke-width="3" stroke-linecap="round"/>
<path d="M275.5,188 L284.5,197 M284.5,188 L275.5,197" stroke="#a8a8a8" stroke-width="1" stroke-linecap="round"/>
<path d="M206,190 H215 L210.5,195.2 Z" fill="#000"/>
<!-- SIDEBAR icons at x=151, row tops: 210,233,256,279,302,325,352,375 ; icon y = rowtop+3.5 -->
<!-- iago: home folder 16 -->
<g transform="translate(151,213)">
<path d="M.5,1.5 Q.5,.5 1.5,.5 H6.8 Q7.6,.5 8,1.3 L8.6,2.5 H13 Q14,2.5 14,3.5 V14.5 H1.5 Q.5,14.5 .5,13.5 Z" fill="#bdbdbd" stroke="#5e5e5e"/>
<path d="M1.5,1.4 H7.4 L8.2,3 H1.5 Z" fill="#f57900"/>
<rect x="2.5" y="4.5" width="13" height="10" rx="1" fill="url(#gSmF)" stroke="#5e5e5e"/>
<path d="M3.5,13.5 V5.5 H14.5" fill="none" stroke="#fff" stroke-opacity=".6"/>
<path d="M9,6.2 L12.9,9.7 L11.6,9.7 L11.6,13 L6.4,13 L6.4,9.7 L5.1,9.7 Z" fill="#f2f2f2" stroke="#8e8e8e" stroke-width=".8" stroke-linejoin="round"/>
</g>
<!-- Escritorio: desktop icon -->
<g transform="translate(151,236)">
<rect x=".5" y="1.5" width="15" height="13" rx=".8" fill="#4a6596" stroke="#34507f"/>
<path d="M1,2 L5,5.5 M15,2 L11,5.5 M1,14 L5,10.5 M15,14 L11,10.5" stroke="#9db2d6" stroke-width=".9"/>
<path d="M5.2,2.2 H10.8 L14.8,5.6 V10.4 L10.8,13.8 H5.2 L1.2,10.4 V5.6 Z" fill="#a6a789" stroke="#595a3e" stroke-width="1" stroke-linejoin="round"/>
<path d="M5.6,3.4 H10.4 L13.6,6.1 V9 L3,9 V6.1 Z" fill="#b6b79a" fill-opacity=".7"/>
</g>
<g transform="translate(151,259)">
<rect x=".5" y="1.5" width="15" height="13" rx="1.2" fill="url(#gDrv)" stroke="#727272"/>
<path d="M1.5,2.5 H14.5 V6.6 Q8,11.2 1.5,6.6 Z" fill="#fdfdfd" fill-opacity=".9"/>
<rect x="1.5" y="10.5" width="13" height="3" fill="#b4b4b4"/>
<path d="M3,11.5 V13 M5.5,11.5 V13 M8,11.5 V13 M10.5,11.5 V13 M12.5,11.5 V13" stroke="#7f7f7f" stroke-width=".9"/>
</g>
<!-- network servers -->
<g transform="translate(151,282)">
<rect x=".5" y=".5" width="10" height="9" rx="1.6" fill="#ececea" stroke="#5d5d5b"/>
<rect x="2.4" y="3" width="3.6" height="5" fill="#5d96dc"/>
<rect x=".5" y="10.5" width="6.5" height="2" rx=".5" fill="#eeeeec" stroke="#5d5d5b"/>
<rect x="5.5" y="3.5" width="10" height="9" rx="1.6" fill="#ececea" stroke="#5d5d5b"/>
<rect x="7.3" y="5.3" width="6.6" height="5.3" fill="#4a8ad8"/>
<rect x="9.6" y="6.4" width="2.2" height="2.2" fill="#d4e6f9"/>
<rect x="5.5" y="13.5" width="10" height="2" rx=".6" fill="#e4e4e2" stroke="#5d5d5b"/>
</g>
<!-- floppy 16 -->
<g transform="translate(151,305)">
<rect x=".5" y="1.5" width="15" height="13" rx="1.2" fill="#e0e0e0" stroke="#5f5f5f"/>
<rect x="1.5" y="2.5" width="13" height="6" fill="#a4a4a4"/>
<path d="M1.5,8.5 H14.5" stroke="#f5f5f5"/>
<rect x="2.5" y="10.8" width="11" height="1" fill="#6e6e6e"/>
<rect x="2.5" y="11.8" width="11" height=".8" fill="#f6f6f6"/>
<circle cx="13.4" cy="13" r=".6" fill="#fff"/>
</g>
<g transform="translate(151,328)">
<rect x=".5" y="1.5" width="15" height="13" rx="1.2" fill="url(#gDrv)" stroke="#727272"/>
<path d="M1.5,2.5 H14.5 V6.6 Q8,11.2 1.5,6.6 Z" fill="#fdfdfd" fill-opacity=".9"/>
<rect x="1.5" y="10.5" width="13" height="3" fill="#b4b4b4"/>
<path d="M3,11.5 V13 M5.5,11.5 V13 M8,11.5 V13 M10.5,11.5 V13 M12.5,11.5 V13" stroke="#7f7f7f" stroke-width=".9"/>
</g>
<g transform="translate(151,355)">
<path d="M.5,1.5 Q.5,.5 1.5,.5 H6.8 Q7.6,.5 8,1.3 L8.6,2.5 H13 Q14,2.5 14,3.5 V14.5 H1.5 Q.5,14.5 .5,13.5 Z" fill="#bdbdbd" stroke="#5e5e5e"/>
<path d="M1.5,1.5 H7 L7.7,3.2 H1.5 Z" fill="#6f7fc0"/>
<rect x="2.5" y="4.5" width="13" height="10" rx="1" fill="url(#gSmF)" stroke="#5e5e5e"/>
<path d="M3.5,13.5 V5.5 H14.5" fill="none" stroke="#fff" stroke-opacity=".6"/>
</g>
<g transform="translate(151,378)">
<path d="M.5,1.5 Q.5,.5 1.5,.5 H6.8 Q7.6,.5 8,1.3 L8.6,2.5 H13 Q14,2.5 14,3.5 V14.5 H1.5 Q.5,14.5 .5,13.5 Z" fill="#bdbdbd" stroke="#5e5e5e"/>
<path d="M1.5,1.5 H7 L7.7,3.2 H1.5 Z" fill="#6f7fc0"/>
<rect x="2.5" y="4.5" width="13" height="10" rx="1" fill="url(#gSmF)" stroke="#5e5e5e"/>
<path d="M3.5,13.5 V5.5 H14.5" fill="none" stroke="#fff" stroke-opacity=".6"/>
</g>
</svg>
</body>
</html>
